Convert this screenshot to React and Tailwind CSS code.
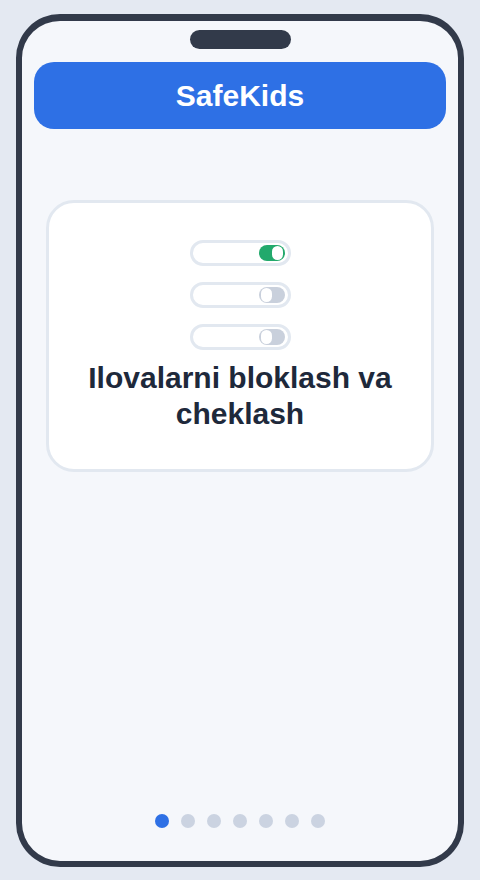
import React from 'react';

const Toggle = ({ on }) => {
    return (
        <div className="flex items-center justify-end w-[101px] h-[26px] pr-[3px] bg-white border-[3px] border-[#e2e8f0] rounded-full">
            <div className={`relative w-[26px] h-4 rounded-full ${on ? 'bg-[#22a96c]' : 'bg-[#c9d0dc]'}`}>
                <span className={`absolute top-[1px] w-[11px] h-[14px] bg-white rounded-full ${on ? 'right-[2px]' : 'left-[2px]'}`} />
            </div>
        </div>
    );
};

const App = () => {
    const dots = [0, 1, 2, 3, 4, 5, 6];
    return (
        <div className="w-[480px] h-[880px] bg-[#e4e9f2] pt-[14px] pl-4" style={{ fontFamily: '"Liberation Sans", Arial, sans-serif' }}>
            <div className="flex flex-col w-[448px] h-[853px] bg-[#f5f7fb] border-[6px] border-t-[7px] border-[#323a4a] rounded-[44px]">
                <div className="flex justify-center pt-[9px]">
                    <div className="w-[101px] h-[19px] bg-[#323a4a] rounded-full" />
                </div>
                <div className="flex items-center justify-center h-[67px] mx-3 mt-[13px] bg-[#2e70e5] rounded-[20px]">
                    <span className="text-3xl font-bold text-white">SafeKids</span>
                </div>
                <div className="flex-1 px-6 pt-[71px]">
                    <div className="flex flex-col items-center pt-[37px] pb-[37px] bg-white border-[3px] border-[#e2e8f0] rounded-[28px]">
                        <div className="flex flex-col items-center gap-4">
                            <Toggle on />
                            <Toggle />
                            <Toggle />
                        </div>
                        <h1 className="mt-[10px] text-3xl font-bold text-center text-[#1e293b]">
                            Ilovalarni bloklash va
                            <br />
                            cheklash
                        </h1>
                    </div>
                </div>
                <div className="flex justify-center gap-3 pb-[33px]">
                    {dots.map((d) => (
                        <span key={d} className={`w-[14px] h-[14px] rounded-full ${d === 0 ? 'bg-[#2e70e5]' : 'bg-[#cbd3e1]'}`} />
                    ))}
                </div>
            </div>
        </div>
    );
};

export default App;
